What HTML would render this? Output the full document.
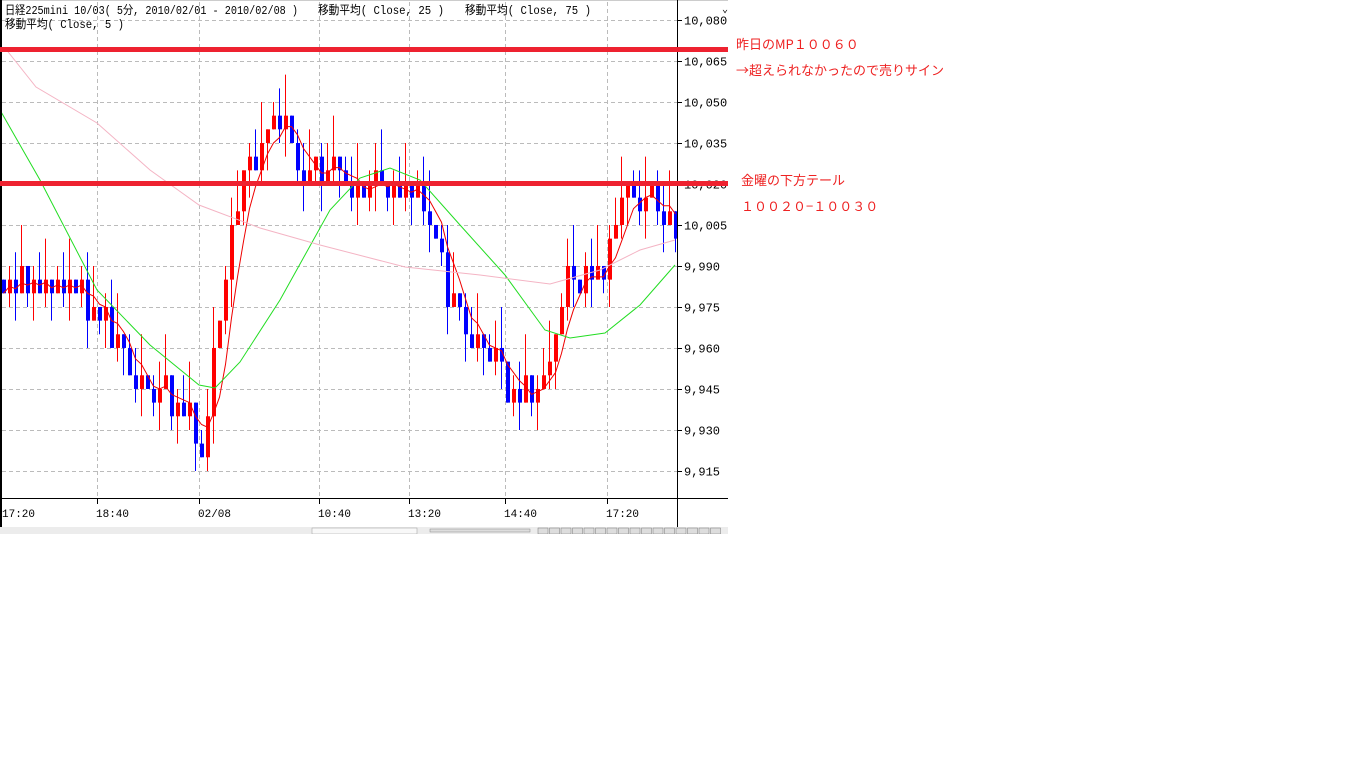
<!DOCTYPE html>
<html><head><meta charset="utf-8"><style>
body{margin:0;background:#fff;width:1366px;height:768px;overflow:hidden;font-family:"Liberation Sans","Noto Sans CJK JP",sans-serif}
.n{position:absolute;color:#ee2222;font-size:13px;font-family:"Noto Sans CJK JP","Liberation Sans",sans-serif;white-space:nowrap}
</style></head><body>
<svg id="c" width="730" height="534" style="position:absolute;left:0;top:0" font-family="'Liberation Mono','Noto Sans CJK JP',monospace" font-size="12"></svg>
<div class="n" style="left:736px;top:34px">昨日のMP１００６０</div>
<div class="n" style="left:736px;top:60px">→超えられなかったので売りサイン</div>
<div class="n" style="left:741px;top:170px">金曜の下方テール</div>
<div class="n" style="left:741px;top:196px">１００２０−１００３０</div>
<script>
var s='';
function Y(p){return 20+(10080-p)*2.733;}
s+='<rect x="0" y="0" width="728" height="534" fill="#fff"/>';
s+='<line x1="0" y1="0.5" x2="728" y2="0.5" stroke="#ccc"/>';
var labels=[10080,10065,10050,10035,10020,10005,9990,9975,9960,9945,9930,9915];
labels.forEach(function(p){var y=Math.round(Y(p))+0.5;
s+='<line x1="2" y1="'+y+'" x2="677" y2="'+y+'" stroke="#bbb" stroke-dasharray="4,3"/>';
s+='<line x1="677" y1="'+y+'" x2="682" y2="'+y+'" stroke="#000"/>';
var t=(p>=10000?(Math.floor(p/1000)+','+String(p%1000).padStart(3,'0')):('9,'+String(p%1000).padStart(3,'0')));
s+='<text x="684" y="'+(y+4)+'" fill="#000">'+t+'</text>';});
[97,199,319,409,505,607].forEach(function(x){s+='<line x1="'+(x+.5)+'" y1="2" x2="'+(x+.5)+'" y2="497" stroke="#bbb" stroke-dasharray="4,3"/>';
s+='<line x1="'+(x+.5)+'" y1="498" x2="'+(x+.5)+'" y2="504" stroke="#000"/>';});
var tl=[[1,'17:20'],[97,'18:40'],[199,'02/08'],[319,'10:40'],[409,'13:20'],[505,'14:40'],[607,'17:20']];
tl.forEach(function(a){s+='<text x="'+(a[0]===1?2:a[0]-1)+'" y="517" fill="#000" font-size="11">'+a[1]+'</text>';});
var pts=[[0,9985],[12,9982],[13,9975],[18,9962],[20,9958],[25,9945],[30,9935],[32,9928],[33,9922],[34,9930],[35,9962],[37,9985],[40,10025],[43,10035],[45,10042],[46,10045],[48,10030],[51,10022],[53,10025],[56,10030],[58,10012],[60,10020],[63,10022],[66,10018],[70,10012],[72,10000],[74,9978],[77,9968],[80,9962],[82,9958],[84,9945],[88,9945],[90,9945],[92,9965],[94,9985],[98,9988],[100,9982],[102,10010],[104,10018],[108,10015],[110,10010],[112,10002]];
var N=113,cl=[];
for(var i=0;i<N;i++){var k=0;while(k<pts.length-2&&pts[k+1][0]<=i)k++;var a=pts[k],b=pts[k+1];var v=a[1]+(b[1]-a[1])*(i-a[0])/(b[0]-a[0]);v+=((i*37)%7-3)*1.4;cl.push(Math.round(v/5)*5);}
var ma=[];
for(var i=0;i<N;i++){var op=i?cl[i-1]:cl[0]+5;var c=cl[i];if(c==op)c=op+((i%2)?5:-5);cl[i]=c;
var hi=Math.max(op,c)+((i*13)%4)*5,lo=Math.min(op,c)-((i*7)%3)*5;var x=2+i*6;
var col=c>op?'#f00':'#00f';
s+='<line x1="'+(x+1.5)+'" y1="'+Y(hi)+'" x2="'+(x+1.5)+'" y2="'+Y(lo)+'" stroke="'+col+'"/>';
s+='<rect x="'+x+'" y="'+Y(Math.max(op,c))+'" width="4" height="'+Math.abs(Y(op)-Y(c))+'" fill="'+col+'"/>';}
for(var i=0;i<N;i++){var sm=0,n=0;for(var j=Math.max(0,i-4);j<=i;j++){sm+=cl[j];n++;}ma.push((3.5+i*6)+','+Y(sm/n).toFixed(1));}
s+='<polyline points="'+ma.join(' ')+'" fill="none" stroke="#e00" stroke-width="1"/>';
s+='<polyline points="0,110 40,180 97,290 150,345 199,385 215,388 240,362 280,300 330,210 360,178 390,168 420,180 460,225 505,275 545,330 570,338 605,333 640,305 675,265" fill="none" stroke="#2d2" stroke-width="1"/>';
s+='<polyline points="5,48 36,87 97,123 150,170 199,205 260,228 320,245 405,267 480,275 550,284 600,270 640,250 675,240" fill="none" stroke="#f4b4c4" stroke-width="1"/>';
s+='<line x1="1" y1="0" x2="1" y2="534" stroke="#000" stroke-width="2"/>';
s+='<line x1="677.5" y1="0" x2="677.5" y2="527" stroke="#000"/>';
s+='<line x1="0" y1="498.5" x2="728" y2="498.5" stroke="#000"/>';
s+='<rect x="0" y="47" width="728" height="5" fill="#ee2230"/>';
s+='<rect x="0" y="181" width="728" height="5" fill="#ee2230"/>';
s+='<text x="5" y="14" fill="#000" font-size="12" textLength="293" lengthAdjust="spacingAndGlyphs">日経225mini 10/03( 5分, 2010/02/01 - 2010/02/08 )</text>';
s+='<text x="318" y="14" fill="#000" font-size="12" textLength="126" lengthAdjust="spacingAndGlyphs">移動平均( Close, 25 )</text>';
s+='<text x="465" y="14" fill="#000" font-size="12" textLength="126" lengthAdjust="spacingAndGlyphs">移動平均( Close, 75 )</text>';
s+='<text x="5" y="28" fill="#000" font-size="12" textLength="119" lengthAdjust="spacingAndGlyphs">移動平均( Close, 5 )</text>';
s+='<text x="722" y="12" fill="#000" font-size="10">⌄</text>';
s+='<rect x="0" y="527" width="728" height="7" fill="#ececec"/>';
s+='<rect x="312" y="528" width="105" height="6" fill="#f8f8f8" stroke="#999" stroke-width=".5"/>';
s+='<rect x="430" y="529" width="100" height="3" fill="#ddd" stroke="#888" stroke-width=".5"/>';
for(var b=0;b<16;b++){s+='<rect x="'+(538+b*11.5)+'" y="528" width="10" height="6" fill="#ddd" stroke="#777" stroke-width=".5"/>';}
document.getElementById('c').innerHTML=s;
</script>
</body></html>
